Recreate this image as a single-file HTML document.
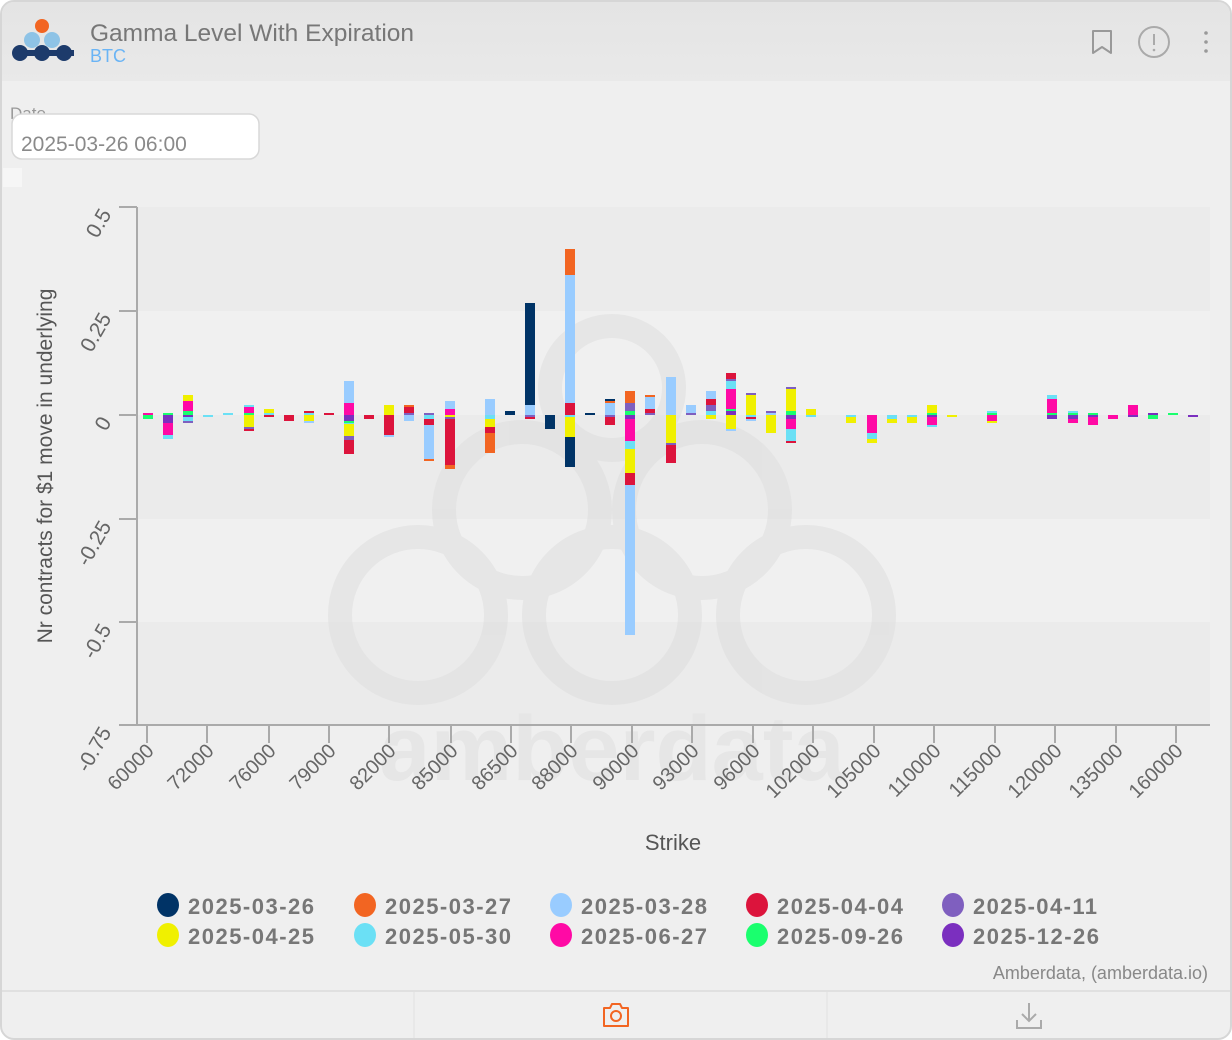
<!DOCTYPE html>
<html><head><meta charset="utf-8"><style>
*{margin:0;padding:0;box-sizing:border-box}
html,body{width:1232px;height:1040px;background:#fff;overflow:hidden;font-family:"Liberation Sans",sans-serif}
.card{position:absolute;left:0;top:0;width:1232px;height:1040px;background:#efefef;border:2px solid #d6d6d6;border-radius:14px;overflow:hidden}
.hdr{position:absolute;left:0;top:0;width:100%;height:79px;background:linear-gradient(#e4e4e4,#e9e9e9)}
.N{fill:#003366}.O{fill:#f26522}.L{fill:#99ccff}.R{fill:#dc143c}.P{fill:#7f5fbf}.Y{fill:#f0f000}.C{fill:#6be0f5}.M{fill:#ff0aa5}.G{fill:#1aff6e}.V{fill:#7b2fbf}
</style></head><body>
<div class="card">
<div class="hdr"></div>
<svg width="1232" height="1040" style="position:absolute;left:-2px;top:-2px" font-family="Liberation Sans, sans-serif">
<circle cx="42" cy="26" r="7" fill="#f26522"/>
<circle cx="32" cy="40" r="8" fill="#8ec3e6"/><circle cx="52" cy="40" r="8" fill="#8ec3e6"/>
<rect x="14" y="50" width="60" height="6" fill="#1d3b6b"/>
<circle cx="20" cy="53" r="8" fill="#1d3b6b"/><circle cx="42" cy="53" r="8" fill="#1d3b6b"/><circle cx="64" cy="53" r="8" fill="#1d3b6b"/>
<text x="90" y="41" font-size="24.5" fill="#777">Gamma Level With Expiration</text>
<text x="90" y="62" font-size="18" fill="#6ab4f5">BTC</text>
<path d="M1093 31h18v22l-9-6-9 6z" fill="none" stroke="#999" stroke-width="2" stroke-linejoin="round"/>
<circle cx="1154" cy="42" r="15" fill="none" stroke="#aaa" stroke-width="2"/>
<line x1="1154" y1="34" x2="1154" y2="45" stroke="#aaa" stroke-width="2"/><circle cx="1154" cy="50" r="1.3" fill="#aaa"/>
<circle cx="1206" cy="33" r="1.8" fill="#999"/><circle cx="1206" cy="42" r="1.8" fill="#999"/><circle cx="1206" cy="51" r="1.8" fill="#999"/>
<text x="10" y="119" font-size="17" fill="#999">Date</text>
<rect x="12" y="114" width="247" height="45" rx="10" fill="#fff" stroke="#d8d8d8" stroke-width="1.5"/>
<text x="21" y="151" font-size="21" fill="#8a8a8a">2025-03-26 06:00</text>
<rect x="3" y="168" width="19" height="19" fill="#f6f6f6"/>
<rect x="137" y="207" width="1073" height="104" fill="#ebebeb"/>
<rect x="137" y="311" width="1073" height="104" fill="#f0f0f0"/>
<rect x="137" y="415" width="1073" height="104" fill="#ebebeb"/>
<rect x="137" y="519" width="1073" height="103" fill="#f0f0f0"/>
<rect x="137" y="622" width="1073" height="103" fill="#ebebeb"/>
<g fill="none" stroke="#dedede" stroke-width="24" opacity="0.55">
<circle cx="612" cy="388" r="62"/>
<circle cx="522" cy="510" r="78"/><circle cx="702" cy="510" r="78"/>
<circle cx="418" cy="615" r="78"/><circle cx="612" cy="615" r="78"/><circle cx="806" cy="615" r="78"/>
</g>
<text x="612" y="780" font-size="92" font-weight="bold" fill="#e6e6e6" text-anchor="middle">amberdata</text>
<line x1="137" y1="207" x2="137" y2="725" stroke="#aaa" stroke-width="2"/>
<line x1="137" y1="725" x2="1210" y2="725" stroke="#aaa" stroke-width="2"/>
<g stroke="#aaa" stroke-width="2">
<line x1="119" y1="207" x2="137" y2="207"/><line x1="119" y1="311" x2="137" y2="311"/><line x1="119" y1="415" x2="137" y2="415"/><line x1="119" y1="519" x2="137" y2="519"/><line x1="119" y1="622" x2="137" y2="622"/><line x1="119" y1="725" x2="137" y2="725"/>
<line x1="147" y1="725" x2="147" y2="743"/><line x1="207" y1="725" x2="207" y2="743"/><line x1="269" y1="725" x2="269" y2="743"/><line x1="329" y1="725" x2="329" y2="743"/><line x1="389" y1="725" x2="389" y2="743"/><line x1="451" y1="725" x2="451" y2="743"/><line x1="511" y1="725" x2="511" y2="743"/><line x1="571" y1="725" x2="571" y2="743"/><line x1="632" y1="725" x2="632" y2="743"/><line x1="692" y1="725" x2="692" y2="743"/><line x1="753" y1="725" x2="753" y2="743"/><line x1="813" y1="725" x2="813" y2="743"/><line x1="874" y1="725" x2="874" y2="743"/><line x1="934" y1="725" x2="934" y2="743"/><line x1="995" y1="725" x2="995" y2="743"/><line x1="1055" y1="725" x2="1055" y2="743"/><line x1="1116" y1="725" x2="1116" y2="743"/><line x1="1176" y1="725" x2="1176" y2="743"/>
</g>
<g font-size="21" fill="#666" text-anchor="end">
<text transform="translate(112,214) rotate(-60)">0.5</text>
<text transform="translate(112,318) rotate(-60)">0.25</text>
<text transform="translate(112,422) rotate(-60)">0</text>
<text transform="translate(112,526) rotate(-60)">-0.25</text>
<text transform="translate(112,629) rotate(-60)">-0.5</text>
<text transform="translate(112,732) rotate(-60)">-0.75</text>
</g>
<g font-size="20" fill="#666" text-anchor="end">
<text transform="translate(155,752) rotate(-45)">60000</text>
<text transform="translate(215,752) rotate(-45)">72000</text>
<text transform="translate(277,752) rotate(-45)">76000</text>
<text transform="translate(337,752) rotate(-45)">79000</text>
<text transform="translate(397,752) rotate(-45)">82000</text>
<text transform="translate(459,752) rotate(-45)">85000</text>
<text transform="translate(519,752) rotate(-45)">86500</text>
<text transform="translate(579,752) rotate(-45)">88000</text>
<text transform="translate(640,752) rotate(-45)">90000</text>
<text transform="translate(700,752) rotate(-45)">93000</text>
<text transform="translate(761,752) rotate(-45)">96000</text>
<text transform="translate(821,752) rotate(-45)">102000</text>
<text transform="translate(882,752) rotate(-45)">105000</text>
<text transform="translate(942,752) rotate(-45)">110000</text>
<text transform="translate(1003,752) rotate(-45)">115000</text>
<text transform="translate(1063,752) rotate(-45)">120000</text>
<text transform="translate(1124,752) rotate(-45)">135000</text>
<text transform="translate(1184,752) rotate(-45)">160000</text>
</g>
<text x="673" y="850" font-size="22" fill="#555" text-anchor="middle">Strike</text>
<text transform="translate(52,466) rotate(-90)" font-size="21" fill="#555" text-anchor="middle">Nr contracts for $1 move in underlying</text>
<g>
<g transform="translate(143,415)"><rect class="M" y="-2" width="10" height="2"/><rect class="G" y="0" width="10" height="4"/></g>
<g transform="translate(163,415)"><rect class="G" y="-2" width="10" height="2"/><rect class="V" y="0" width="10" height="8"/><rect class="M" y="8" width="10" height="12"/><rect class="C" y="20" width="10" height="4"/></g>
<g transform="translate(183,415)"><rect class="G" y="-4" width="10" height="4"/><rect class="M" y="-14" width="10" height="10"/><rect class="Y" y="-20" width="10" height="6"/><rect class="V" y="0" width="10" height="2"/><rect class="C" y="2" width="10" height="4"/><rect class="P" y="6" width="10" height="2"/></g>
<g transform="translate(203,415)"><rect class="C" y="0" width="10" height="2"/></g>
<g transform="translate(223,415)"><rect class="C" y="-2" width="10" height="2"/></g>
<g transform="translate(244,415)"><rect class="G" y="-2" width="10" height="2"/><rect class="M" y="-8" width="10" height="6"/><rect class="C" y="-10" width="10" height="2"/><rect class="Y" y="0" width="10" height="12"/><rect class="P" y="12" width="10" height="2"/><rect class="R" y="14" width="10" height="2"/></g>
<g transform="translate(264,415)"><rect class="C" y="-2" width="10" height="2"/><rect class="Y" y="-6" width="10" height="4"/><rect class="R" y="0" width="10" height="2"/></g>
<g transform="translate(284,415)"><rect class="R" y="0" width="10" height="6"/></g>
<g transform="translate(304,415)"><rect class="C" y="-2" width="10" height="2"/><rect class="R" y="-4" width="10" height="2"/><rect class="Y" y="0" width="10" height="6"/><rect class="L" y="6" width="10" height="2"/></g>
<g transform="translate(324,415)"><rect class="R" y="-2" width="10" height="2"/></g>
<g transform="translate(344,415)"><rect class="M" y="-12" width="10" height="12"/><rect class="L" y="-34" width="10" height="22"/><rect class="V" y="0" width="10" height="6"/><rect class="G" y="6" width="10" height="2"/><rect class="C" y="8" width="10" height="1"/><rect class="Y" y="9" width="10" height="12"/><rect class="P" y="21" width="10" height="4"/><rect class="R" y="25" width="10" height="14"/></g>
<g transform="translate(364,415)"><rect class="R" y="0" width="10" height="4"/></g>
<g transform="translate(384,415)"><rect class="Y" y="-10" width="10" height="10"/><rect class="R" y="0" width="10" height="20"/><rect class="L" y="20" width="10" height="2"/></g>
<g transform="translate(404,415)"><rect class="P" y="-2" width="10" height="2"/><rect class="R" y="-8" width="10" height="6"/><rect class="O" y="-10" width="10" height="2"/><rect class="L" y="0" width="10" height="6"/></g>
<g transform="translate(424,415)"><rect class="P" y="-2" width="10" height="2"/><rect class="C" y="0" width="10" height="4"/><rect class="R" y="4" width="10" height="6"/><rect class="L" y="10" width="10" height="34"/><rect class="O" y="44" width="10" height="2"/></g>
<g transform="translate(445,415)"><rect class="M" y="-6" width="10" height="6"/><rect class="L" y="-14" width="10" height="8"/><rect class="Y" y="0" width="10" height="2"/><rect class="P" y="2" width="10" height="2"/><rect class="R" y="4" width="10" height="46"/><rect class="O" y="50" width="10" height="4"/></g>
<g transform="translate(485,415)"><rect class="L" y="-16" width="10" height="16"/><rect class="C" y="0" width="10" height="4"/><rect class="Y" y="4" width="10" height="8"/><rect class="R" y="12" width="10" height="6"/><rect class="O" y="18" width="10" height="20"/></g>
<g transform="translate(505,415)"><rect class="N" y="-4" width="10" height="4"/></g>
<g transform="translate(525,415)"><rect class="L" y="-10" width="10" height="10"/><rect class="N" y="-112" width="10" height="102"/><rect class="P" y="0" width="10" height="2"/><rect class="R" y="2" width="10" height="2"/></g>
<g transform="translate(545,415)"><rect class="N" y="0" width="10" height="14"/></g>
<g transform="translate(565,415)"><rect class="R" y="-12" width="10" height="12"/><rect class="L" y="-140" width="10" height="128"/><rect class="O" y="-166" width="10" height="26"/><rect class="C" y="0" width="10" height="2"/><rect class="Y" y="2" width="10" height="20"/><rect class="N" y="22" width="10" height="30"/></g>
<g transform="translate(585,415)"><rect class="N" y="-2" width="10" height="2"/></g>
<g transform="translate(605,415)"><rect class="L" y="-12" width="10" height="12"/><rect class="O" y="-14" width="10" height="2"/><rect class="N" y="-16" width="10" height="2"/><rect class="P" y="0" width="10" height="2"/><rect class="R" y="2" width="10" height="8"/></g>
<g transform="translate(625,415)"><rect class="G" y="-4" width="10" height="4"/><rect class="P" y="-12" width="10" height="8"/><rect class="O" y="-24" width="10" height="12"/><rect class="V" y="0" width="10" height="4"/><rect class="M" y="4" width="10" height="22"/><rect class="C" y="26" width="10" height="8"/><rect class="Y" y="34" width="10" height="24"/><rect class="R" y="58" width="10" height="12"/><rect class="L" y="70" width="10" height="150"/></g>
<g transform="translate(645,415)"><rect class="P" y="-2" width="10" height="2"/><rect class="R" y="-6" width="10" height="4"/><rect class="L" y="-18" width="10" height="12"/><rect class="O" y="-20" width="10" height="2"/></g>
<g transform="translate(666,415)"><rect class="L" y="-38" width="10" height="38"/><rect class="Y" y="0" width="10" height="28"/><rect class="P" y="28" width="10" height="2"/><rect class="R" y="30" width="10" height="18"/></g>
<g transform="translate(686,415)"><rect class="P" y="-2" width="10" height="2"/><rect class="L" y="-10" width="10" height="8"/></g>
<g transform="translate(706,415)"><rect class="C" y="-4" width="10" height="4"/><rect class="P" y="-10" width="10" height="6"/><rect class="R" y="-16" width="10" height="6"/><rect class="L" y="-24" width="10" height="8"/><rect class="Y" y="0" width="10" height="4"/></g>
<g transform="translate(726,415)"><rect class="V" y="-4" width="10" height="4"/><rect class="G" y="-6" width="10" height="2"/><rect class="M" y="-26" width="10" height="20"/><rect class="C" y="-34" width="10" height="8"/><rect class="P" y="-36" width="10" height="2"/><rect class="R" y="-42" width="10" height="6"/><rect class="Y" y="0" width="10" height="14"/><rect class="L" y="14" width="10" height="2"/></g>
<g transform="translate(746,415)"><rect class="Y" y="-20" width="10" height="20"/><rect class="P" y="-22" width="10" height="2"/><rect class="C" y="0" width="10" height="2"/><rect class="R" y="2" width="10" height="2"/><rect class="L" y="4" width="10" height="2"/></g>
<g transform="translate(766,415)"><rect class="L" y="-2" width="10" height="2"/><rect class="P" y="-4" width="10" height="2"/><rect class="Y" y="0" width="10" height="18"/></g>
<g transform="translate(786,415)"><rect class="G" y="-4" width="10" height="4"/><rect class="Y" y="-26" width="10" height="22"/><rect class="P" y="-28" width="10" height="2"/><rect class="V" y="0" width="10" height="4"/><rect class="M" y="4" width="10" height="10"/><rect class="C" y="14" width="10" height="12"/><rect class="R" y="26" width="10" height="2"/></g>
<g transform="translate(806,415)"><rect class="Y" y="-6" width="10" height="6"/><rect class="C" y="0" width="10" height="2"/></g>
<g transform="translate(846,415)"><rect class="C" y="0" width="10" height="2"/><rect class="Y" y="2" width="10" height="6"/></g>
<g transform="translate(867,415)"><rect class="M" y="0" width="10" height="18"/><rect class="C" y="18" width="10" height="6"/><rect class="Y" y="24" width="10" height="4"/></g>
<g transform="translate(887,415)"><rect class="C" y="0" width="10" height="4"/><rect class="Y" y="4" width="10" height="4"/></g>
<g transform="translate(907,415)"><rect class="C" y="0" width="10" height="2"/><rect class="Y" y="2" width="10" height="6"/></g>
<g transform="translate(927,415)"><rect class="G" y="-2" width="10" height="2"/><rect class="Y" y="-10" width="10" height="8"/><rect class="V" y="0" width="10" height="2"/><rect class="M" y="2" width="10" height="8"/><rect class="C" y="10" width="10" height="2"/></g>
<g transform="translate(947,415)"><rect class="Y" y="0" width="10" height="2"/></g>
<g transform="translate(987,415)"><rect class="G" y="-2" width="10" height="2"/><rect class="C" y="-4" width="10" height="2"/><rect class="M" y="0" width="10" height="6"/><rect class="Y" y="6" width="10" height="2"/></g>
<g transform="translate(1047,415)"><rect class="G" y="-2" width="10" height="2"/><rect class="M" y="-16" width="10" height="14"/><rect class="C" y="-20" width="10" height="4"/><rect class="V" y="0" width="10" height="4"/></g>
<g transform="translate(1068,415)"><rect class="G" y="-2" width="10" height="2"/><rect class="C" y="-4" width="10" height="2"/><rect class="V" y="0" width="10" height="4"/><rect class="M" y="4" width="10" height="4"/></g>
<g transform="translate(1088,415)"><rect class="G" y="-2" width="10" height="2"/><rect class="V" y="0" width="10" height="2"/><rect class="M" y="2" width="10" height="8"/></g>
<g transform="translate(1108,415)"><rect class="M" y="0" width="10" height="4"/></g>
<g transform="translate(1128,415)"><rect class="M" y="-10" width="10" height="10"/><rect class="V" y="0" width="10" height="2"/></g>
<g transform="translate(1148,415)"><rect class="V" y="-2" width="10" height="2"/><rect class="G" y="0" width="10" height="4"/></g>
<g transform="translate(1168,415)"><rect class="G" y="-2" width="10" height="2"/></g>
<g transform="translate(1188,415)"><rect class="V" y="0" width="10" height="2"/></g>
</g>
<g font-size="22" font-weight="bold" fill="#777">
<ellipse cx="168" cy="905" rx="11" ry="12" class="N"/><text x="188" y="914" textLength="126">2025-03-26</text>
<ellipse cx="365" cy="905" rx="11" ry="12" class="O"/><text x="385" y="914" textLength="126">2025-03-27</text>
<ellipse cx="561" cy="905" rx="11" ry="12" class="L"/><text x="581" y="914" textLength="126">2025-03-28</text>
<ellipse cx="757" cy="905" rx="11" ry="12" class="R"/><text x="777" y="914" textLength="126">2025-04-04</text>
<ellipse cx="953" cy="905" rx="11" ry="12" class="P"/><text x="973" y="914" textLength="124">2025-04-11</text>
<ellipse cx="168" cy="935" rx="11" ry="12" class="Y"/><text x="188" y="944" textLength="126">2025-04-25</text>
<ellipse cx="365" cy="935" rx="11" ry="12" class="C"/><text x="385" y="944" textLength="126">2025-05-30</text>
<ellipse cx="561" cy="935" rx="11" ry="12" class="M"/><text x="581" y="944" textLength="126">2025-06-27</text>
<ellipse cx="757" cy="935" rx="11" ry="12" class="G"/><text x="777" y="944" textLength="126">2025-09-26</text>
<ellipse cx="953" cy="935" rx="11" ry="12" class="V"/><text x="973" y="944" textLength="126">2025-12-26</text>
</g>
<text x="1208" y="979" font-size="18" fill="#888" text-anchor="end">Amberdata, (amberdata.io)</text>
<line x1="0" y1="991" x2="1232" y2="991" stroke="#e0e0e0" stroke-width="2"/>
<line x1="414" y1="992" x2="414" y2="1040" stroke="#e2e2e2" stroke-width="1"/>
<line x1="827" y1="992" x2="827" y2="1040" stroke="#e2e2e2" stroke-width="1"/>
<g fill="none" stroke="#f26522" stroke-width="2" stroke-linejoin="round">
<path d="M604 1008h6l2-4h8l2 4h6v18h-24z"/><circle cx="616" cy="1016" r="5"/>
</g>
<g fill="none" stroke="#aaa" stroke-width="2">
<path d="M1029 1003v18M1022 1014l7 7 7-7M1017 1020v8h24v-8"/>
</g>
</svg>
</div>
</body></html>
